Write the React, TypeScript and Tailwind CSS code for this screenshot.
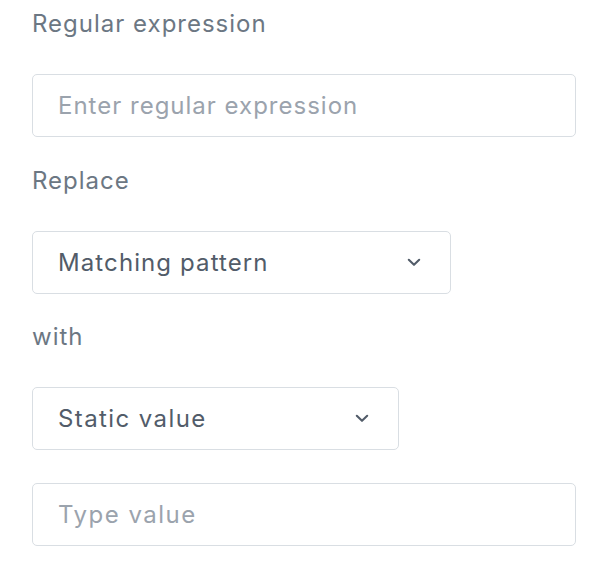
import { ChangeEvent, useState } from "react";

type SelectBoxProps = {
  value: string;
  widthClass: string;
  textClass: string;
};

function Chevron() {
  return (
    <svg
      width="14"
      height="9"
      viewBox="0 0 14 9"
      fill="none"
      className="shrink-0 text-[#525c69]"
    >
      <path
        d="M1.8 1.8L7 6.8L12.2 1.8"
        stroke="currentColor"
        strokeWidth="2.1"
        strokeLinecap="round"
        strokeLinejoin="round"
      />
    </svg>
  );
}

function SelectBox({ value, widthClass, textClass }: SelectBoxProps) {
  return (
    <button
      type="button"
      className={`flex h-[63px] items-center justify-between rounded-[5px] border border-[#d9dee3] bg-white pl-[25px] pr-[29px] text-left ${widthClass}`}
    >
      <span className={`text-[#525c69] ${textClass}`}>{value}</span>
      <Chevron />
    </button>
  );
}

function TextBox({
  placeholder,
  textClass,
}: {
  placeholder: string;
  textClass: string;
}) {
  const [value, setValue] = useState("");

  return (
    <input
      type="text"
      value={value}
      placeholder={placeholder}
      onChange={(event: ChangeEvent<HTMLInputElement>) =>
        setValue(event.target.value)
      }
      className={`block h-[63px] w-[544px] rounded-[5px] border border-[#d9dee3] bg-white px-[25px] text-[#525c69] outline-none placeholder:text-[#9ba3ad] ${textClass}`}
    />
  );
}

export default function App() {
  return (
    <div className="min-h-[564px] bg-white pl-[32px] pt-[8px] font-[family-name:Inter,'Liberation_Sans',sans-serif]">
      <p className="h-[32px] text-[24px] leading-[32px] tracking-[1px] text-[#6c7783]">
        Regular expression
      </p>
      <div className="mt-[34px]">
        <TextBox
          placeholder="Enter regular expression"
          textClass="text-[24px] tracking-[1px]"
        />
      </div>

      <p className="mt-[28px] h-[32px] text-[24px] leading-[32px] tracking-[1px] text-[#6c7783]">
        Replace
      </p>
      <div className="mt-[34px]">
        <SelectBox
          value="Matching pattern"
          widthClass="w-[419px]"
          textClass="text-[24px] tracking-[1.1px]"
        />
      </div>

      <p className="mt-[27px] h-[32px] text-[24px] leading-[32px] tracking-[1px] text-[#6c7783]">
        with
      </p>
      <div className="mt-[34px]">
        <SelectBox
          value="Static value"
          widthClass="w-[367px]"
          textClass="text-[24px] tracking-[1.4px]"
        />
      </div>

      <div className="mt-[33px]">
        <TextBox placeholder="Type value" textClass="text-[24px] tracking-[1.5px]" />
      </div>
    </div>
  );
}
